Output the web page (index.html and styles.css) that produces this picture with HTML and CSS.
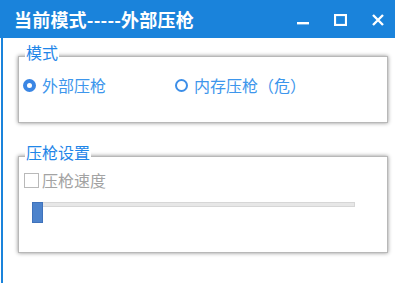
FILE: index.html
```html
<!DOCTYPE html>
<html lang="zh-CN">
<head>
<meta charset="utf-8">
<title>当前模式-----外部压枪</title>
<link rel="stylesheet" href="styles.css">
</head>
<body>
<div class="window">
  <div class="titlebar">
    <div class="title">当前模式-----外部压枪</div>
    <div class="controls">
      <svg class="ctl" width="12" height="12" viewBox="0 0 12 12"><rect x="0" y="8" width="12" height="2.4" fill="#fff"/></svg>
      <svg class="ctl" width="13" height="12" viewBox="0 0 13 12"><rect x="1" y="1" width="11" height="10" fill="none" stroke="#fff" stroke-width="2.2"/></svg>
      <svg class="ctl" width="12" height="12" viewBox="0 0 12 12"><path d="M1 1 L11 11 M11 1 L1 11" stroke="#fff" stroke-width="2.4" fill="none"/></svg>
    </div>
  </div>
  <div class="content">
    <div class="group group-mode">
      <span class="legend">模式</span>
      <div class="radios">
        <label class="radio-item"><span class="radio checked"></span><span class="radio-text">外部压枪</span></label>
        <label class="radio-item"><span class="radio"></span><span class="radio-text">内存压枪（危）</span></label>
      </div>
    </div>
    <div class="group group-set">
      <span class="legend">压枪设置</span>
      <label class="check-item"><span class="checkbox"></span><span class="check-text">压枪速度</span></label>
      <div class="slider">
        <div class="track"></div>
        <div class="thumb"></div>
      </div>
    </div>
  </div>
</div>
</body>
</html>
```
FILE: styles.css
```css
html, body {
  margin: 0;
  padding: 0;
  background: #fff;
}
body {
  width: 395px;
  height: 283px;
  overflow: hidden;
  font-family: "Noto Sans CJK SC", "Noto Sans", sans-serif;
}
.window {
  display: flex;
  flex-direction: column;
  height: 283px;
}
.titlebar {
  height: 38px;
  background: #1a83db;
  display: flex;
  align-items: center;
  padding-left: 14px;
  padding-right: 11px;
  flex: none;
}
.title {
  color: #fff;
  font-size: 18px;
  font-weight: bold;
  line-height: 22px;
  letter-spacing: 0.2px;
}
.controls {
  margin-left: auto;
  display: flex;
  align-items: center;
  gap: 25px;
  padding-top: 1px;
}
.ctl {
  display: block;
}
.content {
  flex: 1;
  margin-left: 1px;
  border-left: 2px solid #1a83db;
  padding: 18px 7px 0 15px;
}
.group {
  position: relative;
  box-sizing: border-box;
  width: 370px;
  border: 1px solid #b8b8b8;
  box-shadow: 0 0 4px rgba(0, 0, 0, 0.45);
  background: #fff;
}
.legend {
  position: absolute;
  top: -15px;
  left: 6px;
  padding: 0 1px;
  background: #fff;
  color: #1f86e8;
  font-size: 16px;
  line-height: 20px;
}
.group-mode {
  height: 67px;
  padding: 18px 0 0 4px;
}
.radios {
  display: grid;
  grid-template-columns: 152px auto;
}
.radio-item {
  display: flex;
  align-items: center;
  height: 20px;
  gap: 6px;
}
.radio {
  box-sizing: border-box;
  width: 13px;
  height: 13px;
  border-radius: 50%;
  border: 2px solid #3c8ee8;
  background: #fff;
}
.radio.checked {
  border: 4px solid #3a86e4;
}
.radio-text {
  color: #3d96ec;
  font-size: 16px;
  line-height: 20px;
}
.group-set {
  margin-top: 33px;
  height: 97px;
  padding: 13px 0 0 5px;
}
.check-item {
  display: flex;
  align-items: center;
  height: 20px;
  gap: 3px;
}
.checkbox {
  box-sizing: border-box;
  width: 15px;
  height: 15px;
  border: 1px solid #b9b9b9;
  background: #fff;
}
.check-text {
  color: #a3a3a3;
  font-size: 16px;
  line-height: 20px;
}
.slider {
  position: relative;
  margin: 12px 0 0 8px;
  width: 323px;
  height: 21px;
}
.track {
  margin-top: 6px;
  height: 5px;
  box-sizing: border-box;
  background: #e7e7e7;
  border: 1px solid #d6d6d6;
}
.thumb {
  position: absolute;
  left: 0;
  top: 0;
  width: 11px;
  height: 21px;
  box-sizing: border-box;
  background: #4d83cc;
  border: 1px solid #3f72bb;
}
```
